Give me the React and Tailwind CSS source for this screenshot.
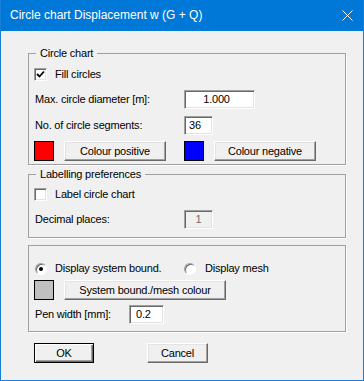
import React from "react";

const sunken =
    "border border-t-[#a0a0a0] border-l-[#a0a0a0] border-b-white border-r-white shadow-[inset_1px_1px_0_#696969,inset_-1px_-1px_0_#e3e3e3]";
const raised =
    "border border-t-white border-l-white border-r-[#696969] border-b-[#696969] shadow-[inset_-1px_-1px_0_#a0a0a0,inset_1px_1px_0_#e3e3e3] bg-[#f0f0f0]";

const Checkbox = ({ checked }) => (
    <div className={`w-[13px] h-[13px] bg-white shrink-0 flex items-center justify-center ${sunken}`}>
        {checked && (
            <svg width="9" height="9" viewBox="0 0 9 9">
                <path d="M1 4 L3.5 6.5 L8 1.5" fill="none" stroke="#000" strokeWidth="1.8" />
            </svg>
        )}
    </div>
);

const Radio = ({ checked }) => (
    <div className="w-[12px] h-[12px] rounded-full bg-white shrink-0 flex items-center justify-center border border-t-[#a0a0a0] border-l-[#a0a0a0] border-b-white border-r-white shadow-[inset_1px_1px_0_#696969]">
        {checked && <div className="w-[4px] h-[4px] rounded-full bg-black" />}
    </div>
);

const Button = ({ children, className = "" }) => (
    <button type="button" className={`h-[20px] flex items-center justify-center ${raised} ${className}`}>
        {children}
    </button>
);

const Swatch = ({ color }) => (
    <div className={`w-[20px] h-[20px] border border-black shrink-0 ${color}`} />
);

export default function App() {
    return (
        <div className="w-[364px] h-[381px] bg-[#f0f0f0] border-x border-b border-[#1a7fd6] flex flex-col font-['Liberation_Sans',Arial,sans-serif] text-[11px] tracking-[-0.2px] text-black leading-[13px]">
            {/* Title bar */}
            <div className="h-[31px] bg-[#0078d7] flex items-center justify-between pl-[9px] pr-[10px] shrink-0">
                <span className="text-white text-[12px] tracking-normal">Circle chart Displacement w (G + Q)</span>
                <svg width="11" height="11" viewBox="0 0 11 11">
                    <path d="M0.5 0.5 L10.5 10.5 M10.5 0.5 L0.5 10.5" stroke="#fff" strokeWidth="1" />
                </svg>
            </div>

            <div className="px-[27px] flex flex-col">
                {/* Circle chart */}
                <fieldset className="mt-[16px] w-[318px] border border-[#a0a0a0] shadow-[1px_1px_0_#fff] px-[5px] pb-[3px]">
                    <legend className="ml-[2px] px-[4px] h-[13px]">Circle chart</legend>
                    <div className="mt-[8px] h-[13px] flex items-center">
                        <Checkbox checked />
                        <span className="ml-[8px]">Fill circles</span>
                    </div>
                    <div className="mt-[9px] h-[19px] flex items-center">
                        <span className="w-[150px] pl-[1px]">Max. circle diameter [m]:</span>
                        <div className={`w-[71px] h-[19px] bg-white flex items-center justify-center pr-[6px] ${sunken}`}>1.000</div>
                    </div>
                    <div className="mt-[7px] h-[19px] flex items-center">
                        <span className="w-[150px] pl-[1px]">No. of circle segments:</span>
                        <div className={`w-[29px] h-[19px] bg-white flex items-center pl-[4px] ${sunken}`}>36</div>
                    </div>
                    <div className="mt-[6px] h-[20px] flex items-center">
                        <Swatch color="bg-[#ff0000]" />
                        <Button className="ml-[10px] w-[102px]">Colour positive</Button>
                        <div className="ml-[18px]">
                            <Swatch color="bg-[#0000ff]" />
                        </div>
                        <Button className="ml-[10px] w-[102px]">Colour negative</Button>
                    </div>
                </fieldset>

                {/* Labelling preferences */}
                <fieldset className="mt-[3px] w-[318px] border border-[#a0a0a0] shadow-[1px_1px_0_#fff] px-[5px] pb-[8px]">
                    <legend className="ml-[2px] px-[4px] h-[13px]">Labelling preferences</legend>
                    <div className="mt-[7px] h-[13px] flex items-center">
                        <Checkbox />
                        <span className="ml-[8px]">Label circle chart</span>
                    </div>
                    <div className="mt-[9px] h-[19px] flex items-center">
                        <span className="w-[150px] pl-[1px]">Decimal places:</span>
                        <div className={`w-[29px] h-[19px] bg-[#f0f0f0] text-[#6d6d6d] flex items-center justify-center ${sunken}`}>1</div>
                    </div>
                </fieldset>

                {/* Display */}
                <div className="mt-[7px] w-[318px] border border-[#a0a0a0] shadow-[1px_1px_0_#fff] px-[5px] pb-[7px]">
                    <div className="mt-[16px] h-[13px] flex items-center">
                        <div className="w-[150px] flex items-center pl-[1px]">
                            <Radio checked />
                            <span className="ml-[8px]">Display system bound.</span>
                        </div>
                        <Radio />
                        <span className="ml-[9px]">Display mesh</span>
                    </div>
                    <div className="mt-[5px] h-[20px] flex items-center">
                        <Swatch color="bg-[#c0c0c0]" />
                        <Button className="ml-[10px] w-[162px]">System bound./mesh colour</Button>
                    </div>
                    <div className="mt-[5px] h-[19px] flex items-center">
                        <span className="w-[95px] pl-[1px]">Pen width [mm]:</span>
                        <div className={`w-[35px] h-[19px] bg-white flex items-center pl-[6px] ${sunken}`}>0.2</div>
                    </div>
                </div>

                {/* Buttons */}
                <div className="mt-[11px] flex items-center">
                    <button
                        type="button"
                        className="ml-[6px] w-[60px] h-[20px] flex items-center justify-center bg-[#f0f0f0] border border-black shadow-[inset_1px_1px_0_#fff,inset_-1px_-1px_0_#696969,inset_-2px_-2px_0_#a0a0a0]"
                    >
                        OK
                    </button>
                    <Button className="ml-[53px] w-[61px]">Cancel</Button>
                </div>
            </div>
        </div>
    );
}
